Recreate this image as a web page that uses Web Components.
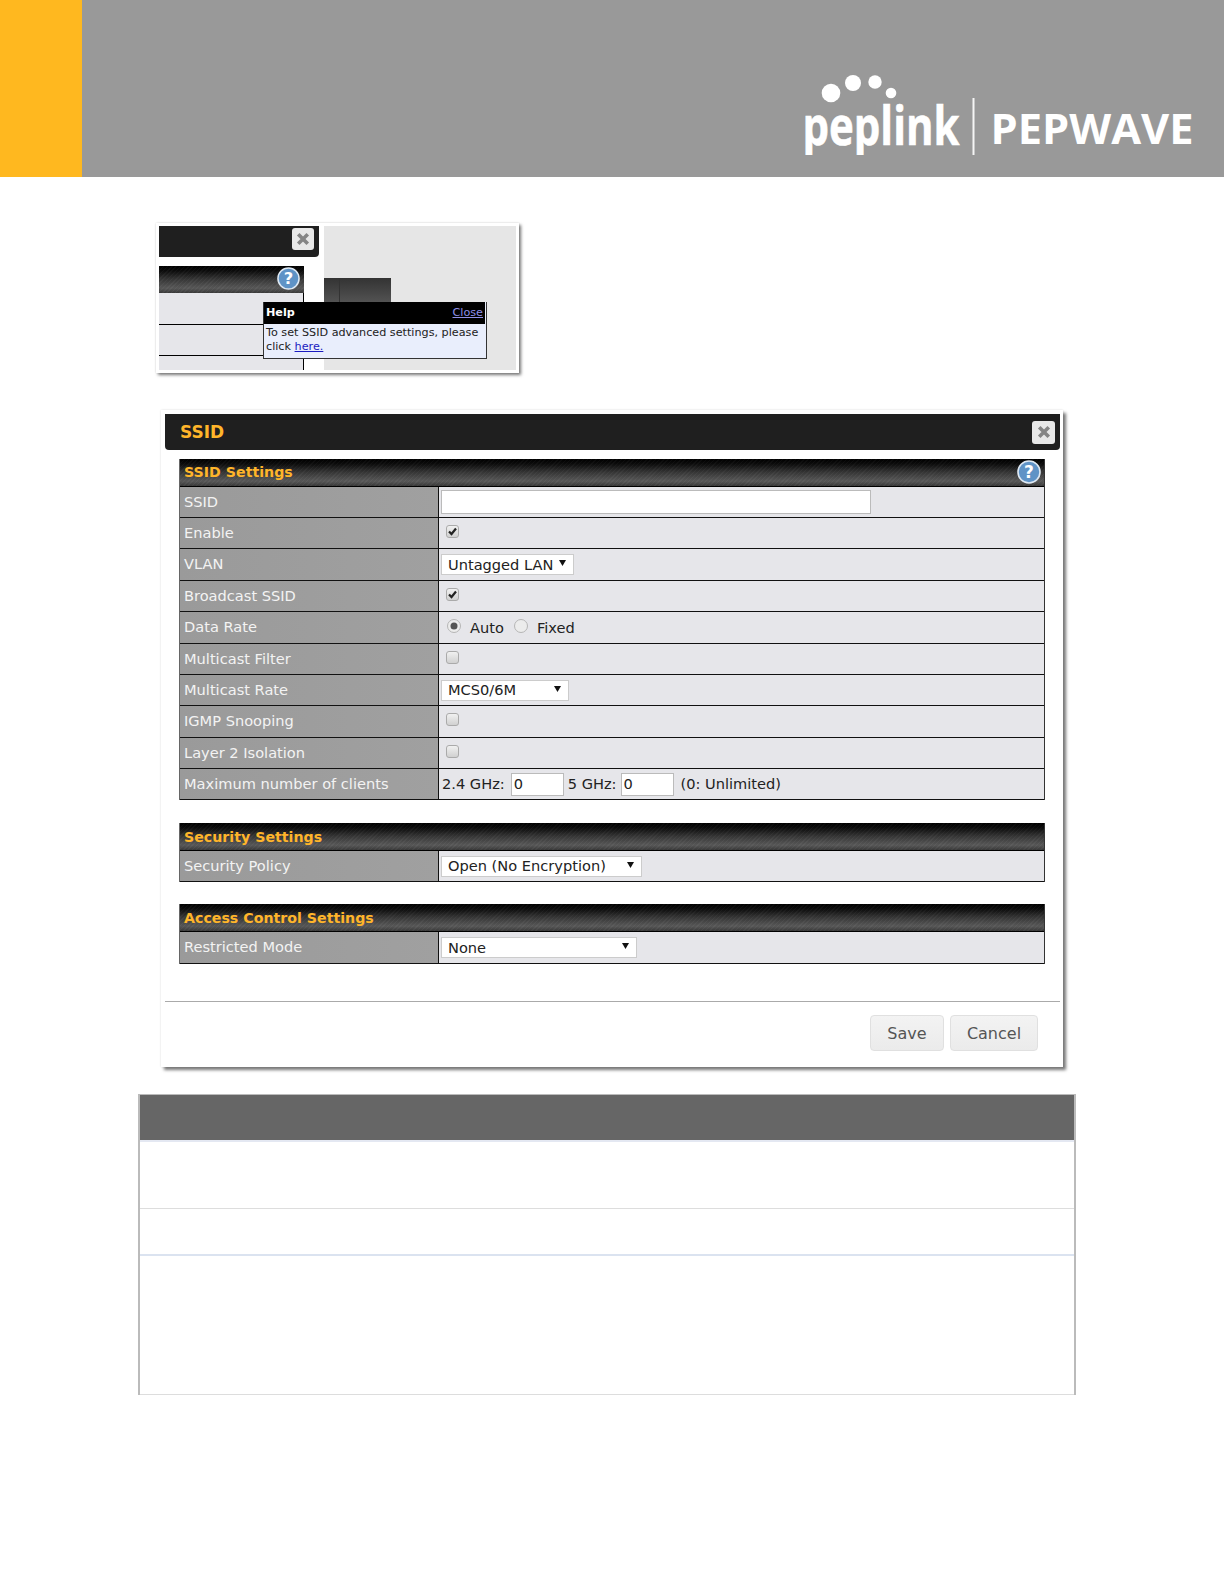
<!DOCTYPE html>
<html><head><meta charset="utf-8"><title>SSID</title>
<style>
html,body{margin:0;background:#fff;font-family:"DejaVu Sans",sans-serif}
body{width:1224px;height:1584px;overflow:hidden}
</style></head><body>
<page-header></page-header>
<help-shot></help-shot>
<ssid-dialog>
  <form-section title="SSID Settings" help>
    <form-row label="SSID" h="31"><text-box w="430" h="24"></text-box></form-row>
    <form-row label="Enable" h="31"><check-box checked></check-box></form-row>
    <form-row label="VLAN" h="32"><select-box w="133" value="Untagged LAN"></select-box></form-row>
    <form-row label="Broadcast SSID" h="31"><check-box checked></check-box></form-row>
    <form-row label="Data Rate" h="32"><radio-box checked style="margin-left:6px"></radio-box><span style="margin-left:9px">Auto</span><radio-box style="margin-left:10px"></radio-box><span style="margin-left:9px">Fixed</span></form-row>
    <form-row label="Multicast Filter" h="31"><check-box></check-box></form-row>
    <form-row label="Multicast Rate" h="31"><select-box w="128" value="MCS0/6M"></select-box></form-row>
    <form-row label="IGMP Snooping" h="32"><check-box></check-box></form-row>
    <form-row label="Layer 2 Isolation" h="31"><check-box></check-box></form-row>
    <form-row label="Maximum number of clients" h="31"><span style="margin:0 0 2px 1px">2.4 GHz:</span><text-box w="53" h="23" value="0" style="margin-left:6px"></text-box><span style="margin:0 0 2px 4px">5 GHz:</span><text-box w="53" h="23" value="0" style="margin-left:4px"></text-box><span style="margin:0 0 2px 7px">(0: Unlimited)</span></form-row>
  </form-section>
  <form-section title="Security Settings" style="margin-top:23px">
    <form-row label="Security Policy" h="31"><select-box w="201" value="Open (No Encryption)"></select-box></form-row>
  </form-section>
  <form-section title="Access Control Settings" style="margin-top:22px">
    <form-row label="Restricted Mode" h="32"><select-box w="196" value="None"></select-box></form-row>
  </form-section>
</ssid-dialog>
<blank-table></blank-table>
<script>
const def=(n,css,html,extra)=>{customElements.define(n,class extends HTMLElement{
  connectedCallback(){ if(this.shadowRoot)return; const s=this.attachShadow({mode:'open'});
    s.innerHTML='<style>'+css+'</style>'+(typeof html==='function'?html(this):html); if(extra)extra(this,s);}
});};
const closeSvg='<svg width="14" height="14" viewBox="0 0 14 14"><path d="M3.500 3.500l7 7M10.500 3.500l-7 7" stroke="#858585" stroke-width="3.600" stroke-linecap="square" fill="none"/></svg>';
const HATCH='repeating-linear-gradient(135deg,rgba(255,255,255,.03) 0 1px,rgba(0,0,0,.03) 1px 3px),linear-gradient(#000 0,#0c0c0c 18%,#383838 50%,#5a5a5a 82%,#3a3a3a 100%)';

def('page-header',`:host{display:flex;height:177px;background:#999}
.y{width:82px;background:#ffb81f}
.l{margin-left:auto;align-self:flex-start}
svg{display:block}
text{fill:#fff}`,
`<div class="y"></div><div class="l"><svg width="430" height="177" viewBox="794 0 430 177">
<defs><clipPath id="c"><rect x="794" y="90" width="180" height="65"/></clipPath></defs>
<circle cx="831" cy="93" r="9.3" fill="#fff"/><circle cx="853" cy="83" r="8" fill="#fff"/><circle cx="875" cy="82" r="6.7" fill="#fff"/><circle cx="891" cy="93" r="5.3" fill="#fff"/>
<text x="802.500" y="145" clip-path="url(#c)" font-family="Open Sans" font-weight="700" font-size="53" stroke="#fff" stroke-width=".6" textLength="157" lengthAdjust="spacingAndGlyphs">peplink</text>
<rect x="972.500" y="98" width="2" height="57" fill="#fff" opacity=".9"/>
<text x="990.500" y="144" font-family="Open Sans" font-weight="700" font-size="41" textLength="203" lengthAdjust="spacingAndGlyphs">PEPWAVE</text>
</svg></div>`);

def('close-x',`:host{display:flex;align-items:center;justify-content:center;width:23px;height:23px;background:#e8e8e8;border-radius:3px}`,closeSvg);

def('help-icon',`:host{display:block;width:24px;height:24px}svg{display:block;width:100%;height:100%}
text{font:bold 17px "DejaVu Sans",sans-serif;fill:#fff}`,
`<svg viewBox="0 0 24 24"><circle cx="12" cy="12" r="11" fill="#5f93c6" stroke="#dfe9f3" stroke-width="1.6"/><text x="12" y="18" text-anchor="middle">?</text></svg>`);

def('help-shot',`:host{display:block;position:relative;box-sizing:border-box;width:363px;height:150px;margin:46px 0 0 156px;padding:3px;background:#fff;box-shadow:2px 2px 3px #777,0 0 2px #ddd}
.wrap{display:flex;height:100%;overflow:hidden}
.left{width:165px;flex:none}
.bar{width:160px;height:31px;background:#1f1f1f;border-radius:0 0 4px 0;display:flex;justify-content:flex-end;padding-right:3px;box-sizing:border-box}
.sec{width:145px;height:27px;margin-top:9px;background:${HATCH};display:flex;align-items:center;justify-content:flex-end;padding-right:4px;box-sizing:border-box}
.rows{width:145px;box-sizing:border-box;border-right:1px solid #000;height:77px}
.rows div{height:31px;background:#e6e6ea;border-bottom:1px solid #000}
.rows div:nth-child(2){height:30px}
.rows div:nth-child(3){height:14px}
.right{flex:1;background:#e6e6e6;padding-top:52px}
.block{width:67px;height:79px;border-bottom:1px solid #333;background:linear-gradient(#333 0,#555 26px,#e6e6e6 26px)}
.block i{display:block;width:1px;height:26px;background:#333;margin-left:15px}
.tip{position:absolute;left:107px;top:79px;width:224px;height:57px;box-sizing:border-box;background:#e9eefc;border:1px solid #333;border-top:0;color:#222;font-size:11.2px;line-height:14px}
.hd{height:22px;background:#000;margin-right:1px;display:flex;align-items:center;justify-content:space-between;padding:0 2px 0 2px;color:#fff;font-weight:700}
.hd a{color:#8f8fe8;font-weight:400;text-decoration:underline}
.bd{padding:2px 2px 0}
.bd a{color:#1a1ac0;text-decoration:underline}
help-icon{width:23px;height:23px;margin-top:-2px}`,
`<div class="wrap"><div class="left"><div class="bar"><close-x style="width:22px;height:22px;margin:2px 2px 0 0"></close-x></div>
<div class="sec"><help-icon></help-icon></div><div class="rows"><div></div><div></div><div></div></div></div>
<div class="right"><div class="block"><i></i></div></div></div>
<div class="tip"><div class="hd"><span>Help</span><a>Close</a></div><div class="bd"><div>To set SSID advanced settings, please</div><div>click <a>here.</a></div></div></div>`);

def('ssid-dialog',`:host{display:block;box-sizing:border-box;width:902px;height:657px;margin:37px 0 0 161px;padding:4px 3px 0 4px;background:#fff;box-shadow:3px 3px 3px #777,0 0 2px #ddd}
.title{height:36px;background:#1f1f1f;border-radius:0 0 4px 4px;display:flex;align-items:center;justify-content:space-between;padding:0 5px 0 15px;font:bold 17px "DejaVu Sans",sans-serif;color:#ffb52a}
.body{margin:9px 15px 0 14px}
.foot{border-top:1px solid #aaa;margin-top:37px;display:flex;justify-content:flex-end;gap:6px;padding:13px 22px 0 0}
button{font:16px "DejaVu Sans",sans-serif;color:#555;height:36px;border:1px solid #e0e0e0;border-radius:4px;background:linear-gradient(#f3f3f3,#ebebeb);padding:0}
.s{width:74px}.c{width:88px}`,
`<div class="title"><span>SSID</span><close-x></close-x></div><div class="body"><slot></slot></div>
<div class="foot"><button class="s">Save</button><button class="c">Cancel</button></div>`);

def('form-section',`:host{display:block;border-left:1px solid #666;border-right:1px solid #333}
.h{height:28px;box-sizing:border-box;border-bottom:1px solid #000;background:${HATCH};display:flex;align-items:center;justify-content:space-between;padding:0 3px 0 4px;font:bold 14.2px "DejaVu Sans",sans-serif;color:#ffb52a}
.h.up{padding-bottom:2px}
help-icon{margin-top:1px}`,
t=>`<div class="h ${t.hasAttribute('help')?'up':''}"><span>${t.getAttribute('title')}</span>${t.hasAttribute('help')?'<help-icon></help-icon>':''}</div><slot></slot>`);

def('form-row',`:host{display:grid;grid-template-columns:258px 1fr;box-sizing:border-box;border-bottom:1px solid #111;font:14.6px "DejaVu Sans",sans-serif}
.k{display:flex;align-items:center;padding:0 0 2px 4px;background:linear-gradient(90deg,#9a9a9a,#a0a0a0);color:#f3f3f3}
.v{display:flex;align-items:center;padding-left:2px;background:#e6e6ea;color:#222;border-left:1px solid #111}`,
t=>`<div class="k">${t.getAttribute('label')}</div><div class="v"><slot></slot></div>`,
t=>{t.style.height=t.getAttribute('h')+'px';});

def('text-box',`:host{display:block;flex:none;box-sizing:border-box;background:#fff;border:1px solid #bbb;font:14.6px "DejaVu Sans",sans-serif;color:#222;padding-left:2px;line-height:19px}`,
t=>t.getAttribute('value')||'',
t=>{t.style.width=t.getAttribute('w')+'px';t.style.height=t.getAttribute('h')+'px';});

def('select-box',`:host{display:flex;flex:none;box-sizing:border-box;height:21px;align-items:center;justify-content:space-between;background:#fff;border:1px solid #ccc;font:14.6px "DejaVu Sans",sans-serif;color:#222;padding:0 6px 1px 6px}
svg{display:block;margin-top:-2px}`,
t=>`<span>${t.getAttribute('value')}</span><svg width="9" height="8" viewBox="0 0 9 8"><path d="M1 1h7L4.500 7z" fill="#111"/></svg>`,
t=>{t.style.width=t.getAttribute('w')+'px';});

def('check-box',`:host{display:block;flex:none;width:13px;height:13px;margin:-4px 0 0 5px}svg{display:block}`,
t=>`<svg width="13" height="13" viewBox="0 0 13 13"><defs><linearGradient id="g" x1="0" y1="0" x2="0" y2="1"><stop offset="0" stop-color="#f2f2f2"/><stop offset="1" stop-color="#cfcfcf"/></linearGradient></defs><rect x=".5" y=".5" width="12" height="12" rx="2.500" fill="url(#g)" stroke="#aaa"/>${t.hasAttribute('checked')?'<path d="M3 6.500l2.500 2.500L10 3.500" stroke="#222" stroke-width="2.200" fill="none"/>':''}</svg>`);

def('radio-box',`:host{display:block;flex:none;width:14px;height:14px;margin-top:-4px}svg{display:block}`,
t=>`<svg width="14" height="14" viewBox="0 0 14 14"><circle cx="7" cy="7" r="6.500" fill="#ececec" stroke="#b5b5b5"/>${t.hasAttribute('checked')?'<circle cx="7" cy="7" r="3.500" fill="#555"/>':''}</svg>`);

def('blank-table',`:host{display:block;box-sizing:border-box;width:938px;margin:27px 0 0 138px;border-left:2px solid #bbb;border-right:2px solid #bbb}
.h{height:46px;background:#666;border-top:1px solid #bbb;box-sizing:border-box}
.r{box-sizing:border-box}
.a{height:69px;border-top:2px solid #e4e8f2;border-bottom:1px solid #ddd}
.b{height:45px}
.c{height:141px;border-top:2px solid #dbe3f0;border-bottom:1px solid #ddd}`,
`<div class="h"></div><div class="r a"></div><div class="r b"></div><div class="r c"></div>`);
</script>
</body></html>
